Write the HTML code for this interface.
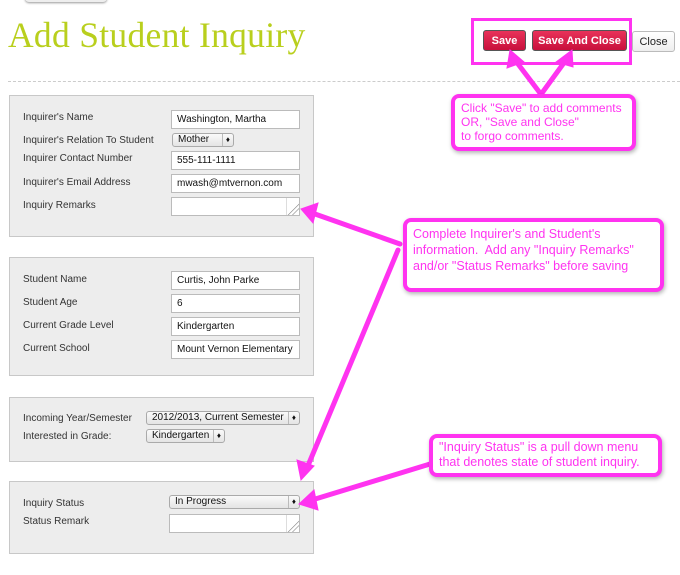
<!DOCTYPE html>
<html><head><style>
body{margin:0;width:680px;height:575px;background:#fff;position:relative;overflow:hidden;font-family:"Liberation Sans",sans-serif;}
.a{position:absolute}
.box{position:absolute;left:9px;width:303px;background:#ededed;border:1px solid #c8c8c8}
.l{position:absolute;left:23px;font-size:10px;color:#333}
.in{position:absolute;background:#fff;border:1px solid #bbb;font-size:10px;color:#111;padding-left:5px;box-sizing:border-box;line-height:17px;height:19px}
.sel{position:absolute;background:linear-gradient(#fafafa,#e4e4e4);border:1px solid #aaa;border-radius:3px;font-size:10px;color:#111;padding-left:5px;box-sizing:border-box;height:14px;line-height:12px}
.sel:after{content:"\2666";position:absolute;right:3px;top:0;font-size:8px;border-left:1px solid #bbb;padding-left:3px}
.ta:after{content:"";position:absolute;right:0;top:0;bottom:0;width:12px;border-left:1px solid #ddd;background:linear-gradient(135deg,transparent 60%,#888 62%,transparent 66%,transparent 75%,#888 77%,transparent 81%)}
.co{position:absolute;border:4px solid #ff33f0;border-radius:8px;background:#fff;color:#ff33f0;font-size:12.5px;line-height:14px;padding:3px 6px;box-sizing:border-box;box-shadow:1px 2px 4px rgba(0,0,0,.3);font-family:"Liberation Sans Narrow","Liberation Sans",sans-serif;white-space:nowrap}
.btn{position:absolute;height:21px;border-radius:3px;font-size:11px;font-weight:bold;line-height:21px;text-align:center;box-sizing:border-box}
</style></head><body>
<div class="a" style="left:25px;top:-8px;width:82px;height:10px;border-radius:4px;background:#eee;box-shadow:0 1px 2px #999"></div>
<div class="a" style="left:8px;top:14px;font-family:'Liberation Serif',serif;font-size:35.5px;color:#b9cf1d;letter-spacing:0.3px">Add Student Inquiry</div>
<div class="a" style="left:8px;top:81px;width:672px;border-top:1px dashed #ccc"></div>

<div class="box" style="top:95px;height:140px"></div>
<div class="l" style="top:112px">Inquirer's Name</div>
<div class="l" style="top:135px">Inquirer's Relation To Student</div>
<div class="l" style="top:153px">Inquirer Contact Number</div>
<div class="l" style="top:177px">Inquirer's Email Address</div>
<div class="l" style="top:200px">Inquiry Remarks</div>
<div class="in" style="left:171px;top:110px;width:129px">Washington, Martha</div>
<div class="sel" style="left:172px;top:133px;width:62px">Mother</div>
<div class="in" style="left:171px;top:151px;width:129px">555-111-1111</div>
<div class="in" style="left:171px;top:174px;width:129px">mwash@mtvernon.com</div>
<div class="in ta" style="left:171px;top:197px;width:129px"></div>

<div class="box" style="top:257px;height:117px"></div>
<div class="l" style="top:274px">Student Name</div>
<div class="l" style="top:297px">Student Age</div>
<div class="l" style="top:320px">Current Grade Level</div>
<div class="l" style="top:343px">Current School</div>
<div class="in" style="left:171px;top:271px;width:129px">Curtis, John Parke</div>
<div class="in" style="left:171px;top:294px;width:129px">6</div>
<div class="in" style="left:171px;top:317px;width:129px">Kindergarten</div>
<div class="in" style="left:171px;top:340px;width:129px">Mount Vernon Elementary</div>

<div class="box" style="top:397px;height:63px"></div>
<div class="l" style="top:413px">Incoming Year/Semester</div>
<div class="l" style="top:431px">Interested in Grade:</div>
<div class="sel" style="left:146px;top:411px;width:154px">2012/2013, Current Semester</div>
<div class="sel" style="left:146px;top:429px;width:79px">Kindergarten</div>

<div class="box" style="top:481px;height:71px"></div>
<div class="l" style="top:498px">Inquiry Status</div>
<div class="l" style="top:516px">Status Remark</div>
<div class="sel" style="left:169px;top:495px;width:131px">In Progress</div>
<div class="in ta" style="left:169px;top:514px;width:131px"></div>

<div class="btn" style="left:483px;top:30px;width:43px;background:linear-gradient(#e8325a,#c8103c);border:1px solid #555;color:#fff">Save</div>
<div class="btn" style="left:532px;top:30px;width:95px;background:linear-gradient(#e8325a,#c8103c);border:1px solid #555;color:#fff">Save And Close</div>
<div class="btn" style="left:632px;top:31px;width:43px;background:linear-gradient(#fff,#eee);border:1px solid #bbb;color:#222;font-weight:normal">Close</div>
<div class="a" style="left:471px;top:18px;width:155px;height:41px;border:3px solid #ff33f0"></div>

<svg class="a" style="left:0;top:0" width="680" height="575">
<g fill="#ff33f0" stroke="#ff33f0" stroke-width="5" stroke-linecap="round">
<line x1="540" y1="93" x2="515" y2="60"/>
<line x1="542" y1="93" x2="566" y2="60"/>
<line x1="400" y1="244" x2="315" y2="214"/>
<line x1="398" y1="250" x2="307" y2="468"/>
<line x1="430" y1="464" x2="312" y2="500"/>
<g stroke-width="1">
<polygon points="510,50 507,68 524,62"/>
<polygon points="572,50 556,62 573,67"/>
<polygon points="301,209 318,203 313,223"/>
<polygon points="301,480 297,460 314,466"/>
<polygon points="299,504 314,490 318,510"/>
</g></g></svg>

<div class="co" style="left:451px;top:94px;width:185px;height:57px;font-size:12px">Click "Save" to add comments<br>OR, "Save and Close"<br>to forgo comments.</div>
<div class="co" style="left:403px;top:218px;width:261px;height:74px;padding-top:4px;line-height:16px">Complete Inquirer's and Student's<br>information.&nbsp; Add any "Inquiry Remarks"<br>and/or "Status Remarks" before saving</div>
<div class="co" style="left:429px;top:434px;width:233px;height:43px;line-height:15px;padding-top:2px">"Inquiry Status" is a pull down menu<br>that denotes state of student inquiry.</div>
</body></html>
